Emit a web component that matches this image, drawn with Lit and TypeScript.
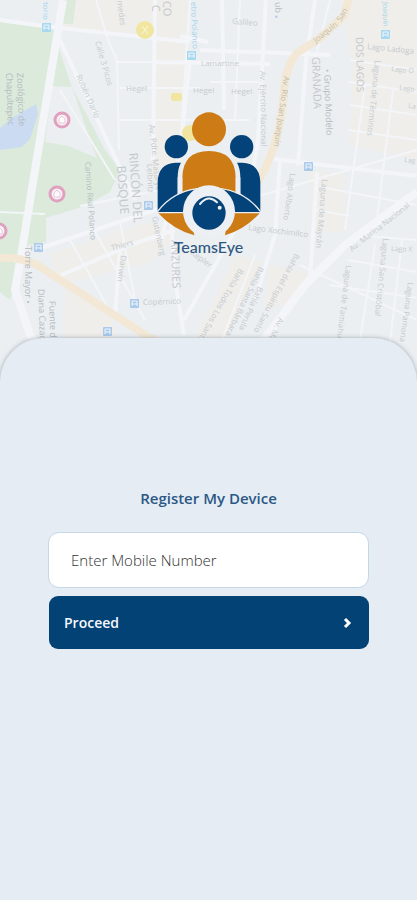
import { LitElement, html, svg, css } from "lit";
import { customElement } from "lit/decorators.js";

type Label = [text: string, x: number, y: number, angle: number, size?: number, kind?: string];

const LABELS: Label[] = [
  ["Zoológico de", 17, 73, 88, 9, "place"],
  ["Chapultepec", 6, 73, 88, 9, "place"],
  ["Calle 3 Picos", 95, 42, 74, 8],
  ["Rubén Darío", 76, 76, 66, 8],
  ["Camino Real Polanco", 85, 162, 86, 8, "place"],
  ["RINCÓN DEL", 129, 153, 86, 12, "district"],
  ["BOSQUE", 117, 166, 86, 12, "district"],
  ["CO", 163, 1, 88, 11, "district"],
  ["C", 152, 5, 88, 11, "district"],
  ["medes", 117, 1, 82, 8],
  ["Hegel", 126, 91, 0, 8],
  ["Av. Pdte. Masaryk", 149, 125, 84, 8],
  ["etro Polanco", 191, 2, 88, 8, "transit"],
  ["torio", 43, 2, 90, 8, "transit"],
  ["Lamartine", 201, 66, 0, 8],
  ["Hegel", 193, 93, 0, 8],
  ["Galileo", 232, 24, 4, 8],
  ["Hegel", 231, 94, 0, 8],
  ["ub", 275, 2, 88, 9, "place"],
  ["▪", 275, 19, 0, 8, "stop"],
  ["Av. Ejército Nacional", 260, 71, 89, 8],
  ["Av. Río San Joaquín", 284, 76, 98, 8, "road"],
  ["Joaquín", 316, 43, -38, 8, "road"],
  ["San", 341, 22, -60, 8, "road"],
  ["GRANADA", 312, 57, 88, 11, "district"],
  ["• Grupo Modelo", 324, 69, 88, 9, "place"],
  ["DOS LAGOS", 356, 37, 89, 10, "district"],
  ["Laguna de Términos", 375, 60, 96, 8],
  ["Joaquín", 383, 2, 89, 7, "transit"],
  ["Lago Ladoga", 367, 49, 6, 8],
  ["Lago O", 391, 71, 6, 7],
  ["Lago", 399, 90, 6, 7],
  ["La", 408, 108, 6, 7],
  ["Lag", 404, 162, 6, 7],
  ["Lago Alberto", 290, 173, 98, 8],
  ["Laguna de Mayrán", 322, 179, 95, 8],
  ["Lago Xochimilco", 248, 230, 7, 8],
  ["Av. Marina Nacional", 352, 252, -38, 8],
  ["Laguna San Cristóbal", 383, 238, 96, 8],
  ["Lago X", 391, 251, 2, 7],
  ["Laguna de Tamiahua", 346, 265, 97, 8],
  ["Laguna Pamona", 408, 282, 98, 8],
  ["Bahía del Espíritu Santo", 295, 253, 118, 8],
  ["Bahía Santa Bárbara", 259, 266, 116, 8],
  ["Bahía Perula", 258, 286, 114, 8],
  ["Bahía Todos Los Santos", 239, 268, 120, 8],
  ["Av. Marina Nacional", 279, 317, 116, 8],
  ["Torre Mayor •", 25, 246, 90, 9, "place"],
  ["Fuente de la", 49, 301, 88, 9, "place"],
  ["Diana Cazadora", 38, 289, 88, 9, "place"],
  ["Leibnitz", 147, 164, 88, 8],
  ["Gutenberg", 152, 217, 78, 8],
  ["Darwin", 121, 255, 98, 8],
  ["Thiers", 112, 251, -16, 8],
  ["Copérnico", 143, 305, -2, 8],
  ["ANZURES", 171, 240, 88, 11, "district"],
  ["Kepler", 190, 254, 36, 8],
];

const STATIONS: [number, number, string][] = [
  [46, 28, "transit"], [191, 56, "transit"], [385, 35, "transit"],
  [308, 167, "metro"], [148, 206, "metro"], [38, 248, "metro"],
  [134, 304, "metro"], [107, 332, "metro"],
];

const LANDMARKS: [number, number][] = [[62, 120], [57, 194], [-1, 231]];

@customElement("city-map")
class CityMap extends LitElement {
  static styles = css`
    :host { display: block; }
    .map { display: block; width: 100%; height: 100%; }
    text { font-family: "Open Sans", "Noto Sans", sans-serif; fill: #c6cace; }
    .place { fill: #b5bbc0; }
    .district { fill: #c3c7cb; }
    .road { fill: #c2bdac; }
    .transit { fill: #a5d5ea; }
    .stop { fill: #aac9eb; }
    .land { fill: #ebeff2; }
    .park { fill: #dbeadb; }
    .water { fill: #cbdcf2; }
    .block { fill: #efeeea; }
    .minor, .street, .avenue { fill: none; stroke: #f3f5f9; }
    .minor { stroke-width: 2; }
    .street { stroke-width: 4; }
    .avenue { stroke-width: 8; }
    .highway { fill: none; stroke: #f2e8d5; stroke-width: 8; }
    .station-transit { fill: #a7d8ef; }
    .station-metro { fill: #aac9eb; }
    .glyph { fill: none; stroke: #eff6fb; stroke-width: 1; }
    .ring { fill: #f8f1f6; stroke: #dfa1bf; stroke-width: 3; }
    .cafe { fill: #f0e6a0; }
    .cafe-glyph { fill: none; stroke: #fbf8de; stroke-width: 1; }
  `;

  render() {
    return html`
      <svg class="map" viewBox="0 0 417 400" preserveAspectRatio="xMidYMin slice" aria-hidden="true">
        <rect class="land" x="-200" width="900" height="400" />
        <path class="block" d="M60 0H190L188 60H155L153 36L62 28Z M155 62H186L180 190L150 180Z M340 0H417V160L350 145L352 60Z M50 254L150 222L178 235L150 262L60 285Z M65 288L110 316L120 345H65Z M270 265L315 275L300 300L265 310Z M235 255L262 262L225 340H195Z M310 170L345 175V232H312Z" />
        <path class="park" d="M0 22L55 30L58 45L71 85L105 150L120 170L110 192L85 206L46 218V242L28 245L10 300L0 292Z M64 0H76L73 24H62Z" />
        <path class="land" d="M52 86L72 87L90 140L97 158L68 146L45 142Z" />
        <path class="water" d="M0 128L12 118L36 104L38 114L30 139L22 147L0 150Z" />
        <path class="minor" d="M0 212L45 214 M60 90L115 180 M96 0L108 40L117 60L119 150 M117 62H200 M119 88H200 M118 120H250 M80 206L160 190 M190 0L182 120 M240 0L235 120 M210 82H262 M330 0L315 60 M350 60L417 70 M348 82L417 92 M350 105L417 115 M348 130L417 140 M320 187L417 205 M315 210L350 216 M355 235L417 240 M348 260L417 272 M330 285L417 298 M365 85L345 230 M393 90L375 235 M70 240L115 320 M95 232L145 320 M120 222L135 300 M375 245L360 340 M402 240L388 360 M300 265L417 320 M255 255L220 345 M245 200L417 150" />
        <path class="street" d="M0 20L60 28L190 42 M155 0L153 160 M190 60L180 150L162 240 M154 62L270 64 M180 36L208 42 M200 50L330 55 M222 0L224 110 M266 0L258 140L250 190 M315 0L306 60L298 165 M60 40L120 168L135 200 M35 250L140 215L170 205 M55 278L130 245L175 230 M170 205L175 280L184 335 M184 320L235 230 M280 160L275 235L255 300 M317 172L310 280 M417 176L265 158 M120 250L115 315" />
        <path class="avenue" d="M63 0L35 170L22 250L15 290L30 335L60 380 M417 192L345 245L305 285L260 345L225 395" />
        <path class="highway" d="M-5 258Q25 256 42 268L150 338L220 370 M350 -5L344 16L320 38L297 53Q286 66 284 90Q282 130 267 165L245 205" />
        <circle class="cafe" cx="145" cy="30" r="9" />
        <path class="cafe-glyph" d="M142 26L148 34M148 26L142 34" />
        <circle class="cafe" cx="190" cy="133" r="8" />
        <rect class="cafe" x="171" y="93" width="11" height="8" rx="3" />
        ${LANDMARKS.map(([x, y]) => svg`<g transform="translate(${x} ${y})"><circle class="ring" r="7" /><path d="M-3 -1L0 -4L3 -1V3H-3Z" fill="#fff" stroke="#ecc4d7" /></g>`)}
        ${STATIONS.map(([x, y, kind]) => svg`<g transform="translate(${x} ${y})"><rect class="station-${kind}" x="-4" y="-5" width="9" height="9" rx="1" /><path class="glyph" d="M-2 2V-3H3V2M-2 0H3" /></g>`)}
        ${LABELS.map(([text, x, y, angle, size = 8, kind = ""]) => svg`<text class=${kind} font-size=${size} transform="translate(${x} ${y}) rotate(${angle})">${text}</text>`)}
      </svg>
    `;
  }
}

@customElement("team-logo")
class TeamLogo extends LitElement {
  static styles = css`
    :host { display: flex; flex-direction: column; align-items: center; }
    .mark { display: block; width: 104px; height: 124px; overflow: visible; }
    .name {
      font: 500 16px/22px Lato, "Open Sans", sans-serif;
      color: #2f5880;
    }
    .navy { fill: #04437a; }
    .amber { fill: #cc7b15; }
    .pale { fill: #eceff3; }
    .gap { fill: none; stroke: #eceff3; stroke-width: 14; }
    .seam { fill: none; stroke: #eceff3; stroke-width: 4; }
    .shine { fill: none; stroke: #eceff3; stroke-width: 6; stroke-linecap: round; }
  `;

  render() {
    return html`
      <svg class="mark" viewBox="36 36 312 372" aria-hidden="true">
        <circle class="amber" cx="192" cy="88" r="51" />
        <circle class="navy" cx="94" cy="140" r="35" />
        <circle class="navy" cx="290" cy="140" r="35" />
        <path class="navy" d="M38 334V246Q40 190 92 188H108Q98 205 98 235V290Z" />
        <path class="navy" d="M346 334V246Q344 190 292 188H276Q286 205 286 235V290Z" />
        <path class="amber" d="M112 282V232Q114 153 192 153Q270 153 272 232V282Z" />
        <path class="gap" d="M105 284V232M279 284V232" />
        <path class="navy" d="M38 336Q86 276 156 267L150 336Z" />
        <path class="navy" d="M346 336Q298 276 228 267L234 336Z" />
        <path class="seam" d="M38 334Q84 275 156 266M346 334Q300 275 228 266" />
        <path class="amber" d="M40 340H134L148 406Q86 390 40 340Z M344 340H250L240 406Q298 390 344 340Z" />
        <circle class="pale" cx="192" cy="334" r="78" />
        <circle class="navy" cx="192" cy="339" r="50" />
        <path class="shine" d="M165 312Q190 282 216 307" />
        <circle class="pale" cx="224" cy="323" r="6" />
      </svg>
      <span class="name">TeamsEye</span>
    `;
  }
}

@customElement("app-root")
class AppRoot extends LitElement {
  static styles = css`
    :host {
      display: flex;
      flex-direction: column;
      min-height: 100vh;
      background: #e6ecf4;
      font-family: "Open Sans", "Noto Sans", sans-serif;
    }
    * { box-sizing: border-box; }
    .hero {
      position: relative;
      min-height: 400px;
      padding-top: 112px;
      overflow: hidden;
    }
    .backdrop { position: absolute; inset: 0; }
    .logo { position: relative; }
    .sheet {
      position: relative;
      flex: 1;
      margin-top: -62px;
      padding: 148px 48px 48px;
      border-radius: 44px 44px 0 0;
      background: #e6ecf4;
      box-shadow: 0 0 4px rgb(90 100 115 / 50%);
    }
    .title {
      margin: 0 0 22px;
      font-size: 15px;
      line-height: 24px;
      font-weight: 600;
      text-align: center;
      color: #2b5885;
    }
    .form { display: flex; flex-direction: column; gap: 8px; }
    .field {
      width: 100%;
      height: 56px;
      padding: 0 22px;
      border: 1px solid #c6d7e6;
      border-radius: 11px;
      background: #fff;
      font: 300 15px/20px "Open Sans", "Noto Sans", sans-serif;
      color: #333;
      outline: none;
    }
    .field::placeholder { color: #333; opacity: 1; }
    .field:focus { border-color: #04437a; }
    .proceed {
      display: flex;
      align-items: center;
      justify-content: space-between;
      height: 53px;
      margin: 0 0 0 1px;
      padding: 0 16px 0 15px;
      border: 0;
      border-radius: 9px;
      background: #034275;
      font: 600 14px/20px "Open Sans", "Noto Sans", sans-serif;
      color: #f6f8fd;
      cursor: pointer;
    }
    .chevron { width: 10px; height: 12px; fill: none; stroke: #fff; stroke-width: 3; }
  `;

  render() {
    return html`
      <header class="hero">
        <city-map class="backdrop"></city-map>
        <team-logo class="logo"></team-logo>
      </header>
      <main class="sheet">
        <h1 class="title">Register My Device</h1>
        <form class="form" @submit=${(e: Event) => e.preventDefault()}>
          <input class="field" type="tel" aria-label="Mobile Number" placeholder="Enter Mobile Number" />
          <button class="proceed" type="submit">
            Proceed
            <svg class="chevron" viewBox="0 0 10 12" aria-hidden="true"><path d="M2 2L6 6L2 10" /></svg>
          </button>
        </form>
      </main>
    `;
  }
}
